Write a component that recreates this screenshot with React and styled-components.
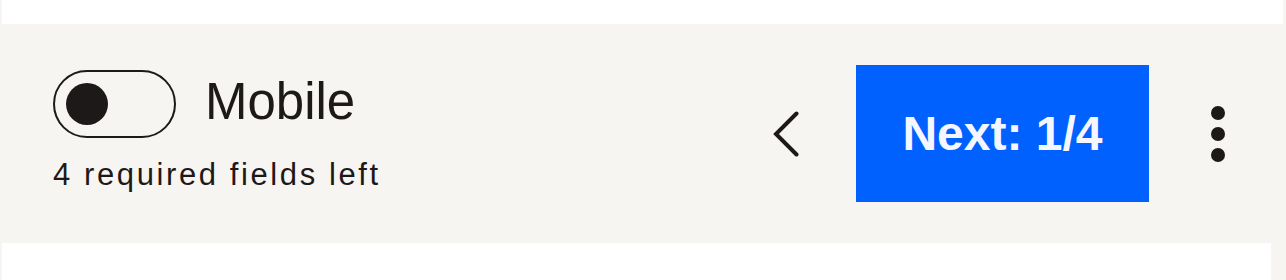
import React, { useState } from "react"
import styled, { createGlobalStyle } from "styled-components"

const GlobalStyle = createGlobalStyle`
  body {
    margin: 0;
    background-color: #f7f5f2;
    font-family: "Liberation Sans", Arial, sans-serif;
    color: #1e1919;
  }
`

const App = () => {
  const [mobile, setMobile] = useState(false)
  const required = 4
  const step = 1
  const total = 4

  return (
    <Page>
      <GlobalStyle />
      <TopCard />
      <Bar>
        <Left>
          <ToggleRow>
            <Switch
              type="button"
              role="switch"
              aria-checked={mobile}
              $on={mobile}
              onClick={() => setMobile(!mobile)}
            >
              <Knob $on={mobile} />
            </Switch>
            <Label>Mobile</Label>
          </ToggleRow>
          <Hint>{required} required fields left</Hint>
        </Left>
        <Right>
          <IconButton aria-label="Previous">
            <svg width="26" height="46" viewBox="0 0 26 46" fill="none">
              <polyline
                points="23.5,2.5 3,23 23.5,43.5"
                stroke="#1e1919"
                strokeWidth="4"
                strokeLinecap="round"
                strokeLinejoin="miter"
              />
            </svg>
          </IconButton>
          <NextButton>
            Next: {step}/{total}
          </NextButton>
          <IconButton aria-label="More">
            <svg width="14" height="56" viewBox="0 0 14 56">
              <circle cx="7" cy="7" r="7" fill="#1e1919" />
              <circle cx="7" cy="28" r="7" fill="#1e1919" />
              <circle cx="7" cy="49" r="7" fill="#1e1919" />
            </svg>
          </IconButton>
        </Right>
      </Bar>
      <BottomCard />
    </Page>
  )
}
export default App

const Page = styled.div`
  width: 100%;
  height: 280px;
  overflow: hidden;
  background-color: #f7f5f2;
`
const TopCard = styled.div`
  height: 24px;
  margin: 0 3px 0 2px;
  background-color: #ffffff;
`
const BottomCard = styled.div`
  height: 40px;
  margin: 0 15px 0 2px;
  background-color: #ffffff;
`
const Bar = styled.div`
  height: 219px;
  box-sizing: border-box;
  padding: 0 61px 0 53px;
  display: flex;
  justify-content: space-between;
  align-items: center;
`
const Left = styled.div`
  display: flex;
  flex-direction: column;
  gap: 19px;
  padding-bottom: 5px;
`
const ToggleRow = styled.div`
  display: flex;
  align-items: center;
  height: 68px;
  gap: 29px;
`
const Switch = styled.button`
  width: 123px;
  height: 68px;
  box-sizing: border-box;
  border: 2.5px solid #1e1919;
  border-radius: 34px;
  background: transparent;
  padding: 0 10.5px;
  display: flex;
  align-items: center;
  justify-content: ${(p) => (p.$on ? "flex-end" : "flex-start")};
  cursor: pointer;
`
const Knob = styled.span`
  width: 42px;
  height: 42px;
  border-radius: 50%;
  background-color: #1e1919;
`
const Label = styled.span`
  font-size: 51px;
  line-height: 68px;
  padding-bottom: 3px;
`
const Hint = styled.div`
  font-size: 31px;
  line-height: 36px;
  letter-spacing: 2.6px;
`
const Right = styled.div`
  display: flex;
  align-items: center;
`
const IconButton = styled.button`
  background: none;
  border: none;
  padding: 0;
  display: flex;
  align-items: center;
  cursor: pointer;
`
const NextButton = styled.button`
  width: 293px;
  height: 137px;
  margin: 0 62px 0 57px;
  border: none;
  background-color: #0061fe;
  color: #f4f7ff;
  font-family: "Liberation Sans", Arial, sans-serif;
  font-size: 48px;
  font-weight: 700;
  cursor: pointer;
`
